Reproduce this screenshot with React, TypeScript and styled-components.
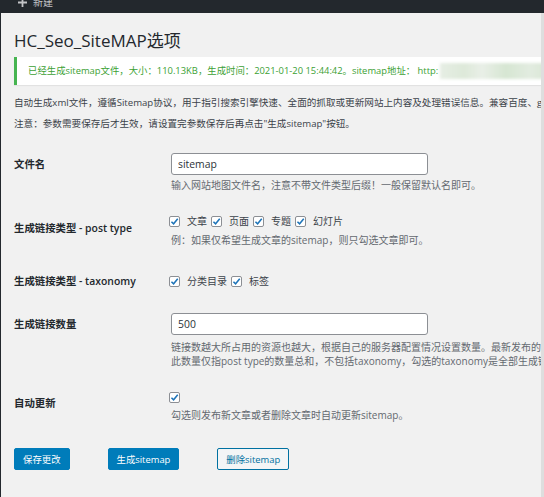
import styled, { createGlobalStyle } from "styled-components";

const GlobalStyle = createGlobalStyle`
  html, body {
    margin: 0;
    padding: 0;
    background: #f1f1f1;
    overflow: hidden;
  }
  body {
    font-family: "Open Sans", "Noto Sans CJK SC", sans-serif;
    color: #3c434a;
  }
`;

export default function App() {
  return (
    <>
      <GlobalStyle />
      <Page>
        <AdminBar>
          <PlusIcon viewBox="0 0 10 10">
            <path d="M4 0h2v4h4v2H6v4H4V6H0V4h4z" fill="#c3c4c7" />
          </PlusIcon>
          <BarText>新建</BarText>
        </AdminBar>

        <Wrap>
          <Title>HC_Seo_SiteMAP选项</Title>

          <Notice>
            <NoticeText>
              已经生成sitemap文件，大小：110.13KB，生成时间：2021-01-20 15:44:42。sitemap地址： http:
              <Blurred />
            </NoticeText>
          </Notice>

          <Intro $gap={11}>
            自动生成xml文件，遵循Sitemap协议，用于指引搜索引擎快速、全面的抓取或更新网站上内容及处理错误信息。兼容百度、google、360等搜索引擎。
          </Intro>
          <Intro $gap={7}>
            注意：参数需要保存后才生效，请设置完参数保存后再点击"生成sitemap"按钮。
          </Intro>

          <FormTable>
            <Row $top={22}>
              <Th $pad={4}>文件名</Th>
              <Td>
                <TextInput readOnly defaultValue="sitemap" />
                <Desc $mt={3}>输入网站地图文件名，注意不带文件类型后缀！一般保留默认名即可。</Desc>
              </Td>
            </Row>

            <Row $top={21}>
              <Th $pad={8}>生成链接类型 - post type</Th>
              <Td>
                <Checks>
                  <CheckItem label="文章" />
                  <CheckItem label="页面" />
                  <CheckItem label="专题" />
                  <CheckItem label="幻灯片" />
                </Checks>
                <Desc $mt={4}>例：如果仅希望生成文章的sitemap，则只勾选文章即可。</Desc>
              </Td>
            </Row>

            <Row $top={26}>
              <Th $pad={1}>生成链接类型 - taxonomy</Th>
              <Td>
                <Checks>
                  <CheckItem label="分类目录" />
                  <CheckItem label="标签" />
                </Checks>
              </Td>
            </Row>

            <Row $top={24}>
              <Th $pad={4}>生成链接数量</Th>
              <Td>
                <TextInput readOnly defaultValue="500" />
                <Desc $mt={5}>
                  链接数越大所占用的资源也越大，根据自己的服务器配置情况设置数量。最新发布的文章优先生成链接。
                </Desc>
                <Desc $mt={0}>
                  此数量仅指post type的数量总和，不包括taxonomy，勾选的taxonomy是全部生成链接。
                </Desc>
              </Td>
            </Row>

            <Row $top={21}>
              <Th $pad={7}>自动更新</Th>
              <Td>
                <Checks>
                  <CheckBox />
                </Checks>
                <Desc $mt={3}>勾选则发布新文章或者删除文章时自动更新sitemap。</Desc>
              </Td>
            </Row>
          </FormTable>

          <Actions>
            <Button $primary>保存更改</Button>
            <Button $primary>生成sitemap</Button>
            <Button>删除sitemap</Button>
          </Actions>
        </Wrap>
      </Page>
    </>
  );
}

function CheckBox() {
  return (
    <Box>
      <svg width="9" height="9" viewBox="0 0 10 10">
        <path d="M1.6 5.2 L4 7.6 L8.6 2" fill="none" stroke="#1e74b8" strokeWidth="1.7" />
      </svg>
    </Box>
  );
}

function CheckItem({ label }: { label: string }) {
  return (
    <CheckLabel>
      <CheckBox />
      <CheckText>{label}</CheckText>
    </CheckLabel>
  );
}

const Page = styled.div`
  width: 544px;
  height: 497px;
  overflow: hidden;
  border-left: 1px solid #23282d;
  box-sizing: border-box;
`;

const AdminBar = styled.div`
  height: 13px;
  margin-left: -1px;
  background: #23282d;
  overflow: hidden;
  display: flex;
  align-items: flex-end;
  gap: 6px;
  padding: 0 0 6px 18px;
  box-sizing: border-box;
`;

const PlusIcon = styled.svg`
  width: 9px;
  height: 9px;
  flex-shrink: 0;
`;

const BarText = styled.span`
  font-size: 10px;
  line-height: 10px;
  color: #c3c4c7;
`;

const Wrap = styled.div`
  padding-left: 13px;
  border-right: 3px solid #dedede;
  height: 484px;
  box-sizing: border-box;
  overflow: hidden;
`;

const Title = styled.h1`
  margin: 17px 0 0;
  font-size: 17px;
  line-height: 22px;
  font-weight: 400;
  color: #23282d;
  white-space: nowrap;
`;

const Notice = styled.div`
  margin-top: 5px;
  height: 28px;
  background: #fff;
  border-left: 3px solid #46b450;
  box-shadow: 0 1px 1px rgba(0, 0, 0, 0.06);
  padding-left: 11px;
  display: flex;
  align-items: center;
  overflow: hidden;
`;

const NoticeText = styled.p`
  margin: 0;
  font-size: 9.4px;
  line-height: 14px;
  color: #3c9f34;
  white-space: nowrap;
  display: flex;
  align-items: center;
`;

const Blurred = styled.span`
  display: inline-block;
  width: 120px;
  height: 16px;
  margin-left: 2px;
  background: linear-gradient(
    90deg,
    #e6eee4 0%,
    #dde9d9 20%,
    #e9efe7 35%,
    #d6e6d2 55%,
    #e2ece0 75%,
    #d2e3cd 100%
  );
  filter: blur(1.5px);
`;

const Intro = styled.p<{ $gap: number }>`
  margin: ${({ $gap }) => $gap}px 0 0;
  font-size: 9.6px;
  line-height: 14px;
  color: #3c434a;
  white-space: nowrap;
`;

const FormTable = styled.div`
  display: flex;
  flex-direction: column;
`;

const Row = styled.div<{ $top: number }>`
  display: grid;
  grid-template-columns: 157px 1fr;
  align-items: start;
  margin-top: ${({ $top }) => $top}px;
`;

const Th = styled.div<{ $pad: number }>`
  padding-top: ${({ $pad }) => $pad}px;
  font-size: 10.4px;
  line-height: 14px;
  font-weight: 600;
  color: #23282d;
  white-space: nowrap;
`;

const Td = styled.div`
  min-width: 0;
`;

const TextInput = styled.input`
  display: block;
  width: 257px;
  height: 22px;
  box-sizing: border-box;
  margin: 0;
  padding: 0 6px;
  border: 1px solid #8c8f94;
  border-radius: 3px;
  background: #fff;
  font-family: "Open Sans", "Noto Sans CJK SC", sans-serif;
  font-size: 10.4px;
  color: #2c3338;
  outline: none;
`;

const Desc = styled.p<{ $mt: number }>`
  margin: ${({ $mt }) => $mt}px 0 0;
  font-size: 10px;
  line-height: 14px;
  color: #646970;
  white-space: nowrap;
`;

const Checks = styled.div`
  display: flex;
  align-items: center;
  height: 16px;
  margin-left: -2px;
  gap: 4px;
`;

const CheckLabel = styled.span`
  display: inline-flex;
  align-items: center;
  gap: 7px;
`;

const Box = styled.span`
  width: 11px;
  height: 11px;
  box-sizing: border-box;
  border: 1px solid #8c8f94;
  border-radius: 2px;
  background: #fff;
  display: inline-flex;
  align-items: center;
  justify-content: center;
`;

const CheckText = styled.span`
  font-size: 10px;
  line-height: 14px;
  color: #3c434a;
`;

const Actions = styled.div`
  display: flex;
  gap: 38px;
  margin-top: 26px;
`;

const Button = styled.span<{ $primary?: boolean }>`
  display: inline-flex;
  align-items: center;
  height: 22px;
  box-sizing: border-box;
  padding: 0 8px;
  border-radius: 2px;
  font-size: 9.4px;
  white-space: nowrap;
  border: 1px solid ${({ $primary }) => ($primary ? "#007cba" : "#0071a1")};
  background: ${({ $primary }) => ($primary ? "#007cba" : "#f3f5f6")};
  color: ${({ $primary }) => ($primary ? "#fff" : "#0071a1")};
`;
